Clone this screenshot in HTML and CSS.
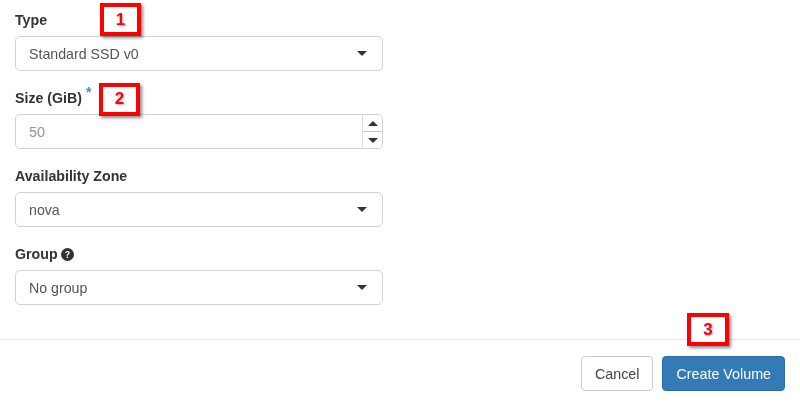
FILE: index.html
```html
<!DOCTYPE html>
<html lang="en">
<head>
<meta charset="utf-8">
<title>Create Volume</title>
<link rel="stylesheet" href="styles.css">
</head>
<body>
<div class="modal">
  <form class="form">
    <div class="group">
      <label class="label">Type</label>
      <div class="control select"><span>Standard SSD v0</span><i class="caret"></i></div>
    </div>
    <div class="group">
      <label class="label">Size (GiB) <sup class="req">*</sup></label>
      <div class="control number">
        <span class="placeholder">50</span>
        <div class="spin"><b class="spin-btn"><i class="caret up"></i></b><b class="spin-btn"><i class="caret"></i></b></div>
      </div>
    </div>
    <div class="group">
      <label class="label">Availability Zone</label>
      <div class="control select"><span>nova</span><i class="caret"></i></div>
    </div>
    <div class="group">
      <label class="label">Group
        <svg class="help" viewBox="0 0 24 24" width="13" height="13"><circle cx="12" cy="12" r="12" fill="#333"/><path d="M8 9.200c.2-2.300 1.800-3.600 4.100-3.600 2.300 0 4 1.300 4 3.300 0 1.600-.9 2.400-2 3.100-.9.600-1.100 1-1.100 1.900v.4h-2.500v-.7c0-1.500.5-2.300 1.700-3.100.9-.6 1.300-1 1.300-1.600 0-.8-.6-1.300-1.500-1.300-1 0-1.500.6-1.600 1.600z" fill="#fff"/><rect x="10.500" y="15.800" width="2.600" height="2.600" fill="#fff"/></svg>
      </label>
      <div class="control select"><span>No group</span><i class="caret"></i></div>
    </div>
  </form>
  <div class="footer">
    <button type="button" class="btn btn-default">Cancel</button>
    <button type="button" class="btn btn-primary">Create Volume</button>
  </div>
</div>
<div class="mark mark-1">1</div>
<div class="mark mark-2">2</div>
<div class="mark mark-3">3</div>
</body>
</html>
```
FILE: styles.css
```css
* { box-sizing: border-box; }
html, body { margin: 0; height: 408px; overflow: hidden; }
body { background: #fff; color: #333; font-family: "Liberation Sans", Arial, sans-serif; font-size: 14.2px; line-height: 20px; position: relative; filter: blur(.3px); }
.modal { height: 408px; display: flex; flex-direction: column; }
.form { padding: 10px 0 0 15px; width: 383px; height: 339px; }
.group { margin-bottom: 17px; }
.label { display: block; font-weight: 700; height: 20px; margin-bottom: 6px; color: #333; }
.control { height: 35px; border: 1px solid #d2d2d2; border-radius: 5px; background: #fff; color: #555; padding: 6px 12px 6px 13px; display: flex; align-items: center; justify-content: space-between; }
.caret { display: block; width: 0; height: 0; border-left: 5px solid transparent; border-right: 5px solid transparent; border-top: 5px solid #333; }
.select .caret { margin-right: 3px; }
.caret.up { border-top: 0; border-bottom: 5px solid #333; }
.number { padding-right: 0; position: relative; }
.placeholder { color: #999; }
.spin { width: 20px; height: 33px; display: flex; flex-direction: column; border-left: 1px solid #ddd; }
.spin-btn { flex: 1; display: flex; align-items: center; justify-content: center; }
.spin-btn + .spin-btn { border-top: 1px solid #ccc; }
.req { color: #428bca; font-size: 14px; line-height: 0; font-weight: 700; position: relative; top: 0; }
.help { vertical-align: -2px; margin-left: -1px; }
.footer { border-top: 1px solid #e8e8e8; padding: 16px 15px; display: flex; justify-content: flex-end; gap: 9px; }
.btn { height: 35px; border-radius: 4px; font: 14.3px/20px "Liberation Sans", Arial, sans-serif; padding: 6px 13px; border: 1px solid #ccc; }
.btn-default { background: #fff; color: #444; }
.btn-primary { background: #337ab7; border-color: #2e6da4; color: #fff; }
.mark { position: absolute; border: 4px solid #f00; color: #f00; font-weight: 700; font-size: 17px; line-height: 25px; text-align: center; box-shadow: 2px 2px 3px rgba(0,0,0,.45); text-shadow: 1px 1px 2px rgba(40,40,120,.4); background: #fff; }
.mark-1 { left: 100px; top: 3px; width: 41px; height: 33px; }
.mark-2 { left: 99px; top: 83px; width: 41px; height: 33px; line-height: 24px; }
.mark-3 { left: 687px; top: 313px; width: 42px; height: 33px; }
```
